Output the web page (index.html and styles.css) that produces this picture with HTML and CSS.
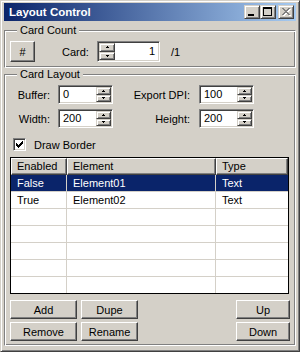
FILE: index.html
```html
<!DOCTYPE html>
<html>
<head>
<meta charset="utf-8">
<title>Layout Control</title>
<link rel="stylesheet" href="styles.css">
</head>
<body>
<div class="window">
  <div class="titlebar">
    <span class="title">Layout Control</span>
    <div class="caption-btns">
      <span class="cbtn"><svg width="14" height="12"><rect x="3" y="8" width="6" height="2"/></svg></span>
      <span class="cbtn"><svg width="14" height="12"><rect x="2" y="1" width="9" height="2"/><rect x="2" y="1" width="1" height="9"/><rect x="10" y="1" width="1" height="9"/><rect x="2" y="9" width="9" height="1"/></svg></span>
      <span class="cbtn cbtn-close"><svg width="14" height="12">
        <g fill="#fff" transform="translate(4 3)"><rect x="0" y="0" width="2" height="1"/><rect x="6" y="0" width="2" height="1"/><rect x="1" y="1" width="2" height="1"/><rect x="5" y="1" width="2" height="1"/><rect x="2" y="2" width="4" height="1"/><rect x="3" y="3" width="2" height="1"/><rect x="2" y="4" width="4" height="1"/><rect x="1" y="5" width="2" height="1"/><rect x="5" y="5" width="2" height="1"/><rect x="0" y="6" width="2" height="1"/><rect x="6" y="6" width="2" height="1"/></g>
        <g fill="#808080" transform="translate(3 2)"><rect x="0" y="0" width="2" height="1"/><rect x="6" y="0" width="2" height="1"/><rect x="1" y="1" width="2" height="1"/><rect x="5" y="1" width="2" height="1"/><rect x="2" y="2" width="4" height="1"/><rect x="3" y="3" width="2" height="1"/><rect x="2" y="4" width="4" height="1"/><rect x="1" y="5" width="2" height="1"/><rect x="5" y="5" width="2" height="1"/><rect x="0" y="6" width="2" height="1"/><rect x="6" y="6" width="2" height="1"/></g>
      </svg></span>
    </div>
  </div>

  <div class="client">
    <div class="group group-count">
      <span class="legend">Card Count</span>
      <div class="count-row">
        <span class="btn btn-hash">#</span>
        <span class="lbl-card">Card:</span>
        <div class="field field-card">
          <div class="spin">
            <span class="spin-btn spin-up"><svg width="3" height="2"><rect x="1" y="0" width="1" height="1"/><rect x="0" y="1" width="3" height="1"/></svg></span>
            <span class="spin-btn spin-down"><svg width="3" height="2"><rect x="0" y="0" width="3" height="1"/><rect x="1" y="1" width="1" height="1"/></svg></span>
          </div>
          <span class="val val-right">1</span>
        </div>
        <span class="of">/1</span>
      </div>
    </div>

    <div class="group group-layout">
      <span class="legend">Card Layout</span>
      <div class="params">
        <span class="plabel">Buffer:</span>
        <div class="field field-num">
          <span class="val">0</span>
          <div class="spin">
            <span class="spin-btn spin-up"><svg width="3" height="2"><rect x="1" y="0" width="1" height="1"/><rect x="0" y="1" width="3" height="1"/></svg></span>
            <span class="spin-btn spin-down"><svg width="3" height="2"><rect x="0" y="0" width="3" height="1"/><rect x="1" y="1" width="1" height="1"/></svg></span>
          </div>
        </div>
        <span class="plabel plabel-2">Export DPI:</span>
        <div class="field field-num">
          <span class="val">100</span>
          <div class="spin">
            <span class="spin-btn spin-up"><svg width="3" height="2"><rect x="1" y="0" width="1" height="1"/><rect x="0" y="1" width="3" height="1"/></svg></span>
            <span class="spin-btn spin-down"><svg width="3" height="2"><rect x="0" y="0" width="3" height="1"/><rect x="1" y="1" width="1" height="1"/></svg></span>
          </div>
        </div>
        <span class="plabel">Width:</span>
        <div class="field field-num">
          <span class="val">200</span>
          <div class="spin">
            <span class="spin-btn spin-up"><svg width="3" height="2"><rect x="1" y="0" width="1" height="1"/><rect x="0" y="1" width="3" height="1"/></svg></span>
            <span class="spin-btn spin-down"><svg width="3" height="2"><rect x="0" y="0" width="3" height="1"/><rect x="1" y="1" width="1" height="1"/></svg></span>
          </div>
        </div>
        <span class="plabel plabel-2">Height:</span>
        <div class="field field-num">
          <span class="val">200</span>
          <div class="spin">
            <span class="spin-btn spin-up"><svg width="3" height="2"><rect x="1" y="0" width="1" height="1"/><rect x="0" y="1" width="3" height="1"/></svg></span>
            <span class="spin-btn spin-down"><svg width="3" height="2"><rect x="0" y="0" width="3" height="1"/><rect x="1" y="1" width="1" height="1"/></svg></span>
          </div>
        </div>
      </div>

      <div class="check-row">
        <span class="checkbox"><svg width="9" height="9"><rect x="1" y="3" width="1" height="3"/><rect x="2" y="4" width="1" height="3"/><rect x="3" y="5" width="1" height="3"/><rect x="4" y="4" width="1" height="3"/><rect x="5" y="3" width="1" height="3"/><rect x="6" y="2" width="1" height="3"/><rect x="7" y="1" width="1" height="3"/></svg></span>
        <span class="check-label">Draw Border</span>
      </div>

      <div class="list">
        <div class="grid">
          <div class="hd">Enabled</div><div class="hd">Element</div><div class="hd">Type</div>
          <div class="c sel">False</div><div class="c sel">Element01</div><div class="c sel">Text</div>
          <div class="c">True</div><div class="c">Element02</div><div class="c">Text</div>
          <div class="c"></div><div class="c"></div><div class="c"></div>
          <div class="c"></div><div class="c"></div><div class="c"></div>
          <div class="c"></div><div class="c"></div><div class="c"></div>
          <div class="c"></div><div class="c"></div><div class="c"></div>
          <div class="c"></div><div class="c"></div><div class="c"></div>
        </div>
      </div>

      <div class="actions">
        <div class="actions-left">
          <span class="btn">Add</span>
          <span class="btn">Dupe</span>
          <span class="btn">Remove</span>
          <span class="btn">Rename</span>
        </div>
        <div class="actions-right">
          <span class="btn">Up</span>
          <span class="btn">Down</span>
        </div>
      </div>
    </div>
  </div>
</div>
</body>
</html>
```
FILE: styles.css
```css
* { box-sizing: border-box; }
html, body { margin: 0; padding: 0; }
body {
  width: 300px;
  height: 352px;
  background: #d4d0c8;
  font-family: "Liberation Sans", Arial, sans-serif;
  font-size: 11px;
  color: #000;
  overflow: hidden;
}
svg { display: block; }

.window {
  width: 300px;
  height: 352px;
  border: 1px solid;
  border-color: #d4d0c8 #404040 #404040 #d4d0c8;
  box-shadow: inset 1px 1px #fff, inset -1px -1px #808080;
  padding: 2px 3px 3px 3px;
  background: #d4d0c8;
  display: flex;
  flex-direction: column;
}

.titlebar {
  height: 18px;
  flex: none;
  display: flex;
  align-items: flex-start;
  background: linear-gradient(to right, #0a246a, #a6caf0);
}
.title {
  color: #fff;
  font-weight: bold;
  font-size: 11.5px;
  line-height: 18px;
  padding-left: 5px;
  flex: 1;
}
.caption-btns {
  display: flex;
  margin-top: 2px;
  margin-right: 2px;
}
.cbtn {
  width: 16px;
  height: 14px;
  border: 1px solid;
  border-color: #d4d0c8 #404040 #404040 #d4d0c8;
  box-shadow: inset 1px 1px #fff, inset -1px -1px #808080;
  background: #d4d0c8;
  fill: #000;
}
.cbtn-close { margin-left: 2px; }

.client {
  flex: 1;
  display: flex;
  flex-direction: column;
}

.group {
  border: 1px solid;
  border-color: #808080 #fff #fff #808080;
  box-shadow: inset 1px 1px #fff, inset -1px -1px #808080;
  display: flex;
  flex-direction: column;
  align-items: flex-start;
}
.legend {
  margin: -7px 0 0 7px;
  padding: 0 3px;
  height: 13px;
  line-height: 13px;
  background: #d4d0c8;
}

.group-count {
  margin-top: 9px;
  height: 38px;
  padding-left: 5px;
}
.count-row {
  margin-top: 4px;
  height: 21px;
  display: flex;
  align-items: center;
}
.btn {
  display: flex;
  align-items: center;
  justify-content: center;
  border: 1px solid;
  border-color: #fff #404040 #404040 #fff;
  box-shadow: inset -1px -1px #808080;
  background: #d4d0c8;
  height: 19px;
}
.btn-hash {
  width: 25px;
  height: 21px;
}
.lbl-card {
  margin-left: 27px;
  width: 35px;
}
.of { margin-left: 11px; }

.field {
  display: flex;
  border: 1px solid;
  border-color: #808080 #fff #fff #808080;
  box-shadow: inset 1px 1px #404040, inset -1px -1px #d4d0c8;
  padding: 1px;
  background: #fff;
}
.field-card {
  width: 63px;
  height: 21px;
}
.field-num {
  width: 55px;
  height: 19px;
}
.val {
  flex: 1;
  padding-left: 3px;
  line-height: 15px;
}
.field-card .val { line-height: 17px; }
.val-right {
  text-align: right;
  padding-left: 0;
  padding-right: 3px;
}
.spin {
  width: 15px;
  display: flex;
  flex-direction: column;
}
.field-card .spin { width: 16px; }
.spin-btn {
  flex: 1;
  display: flex;
  align-items: center;
  justify-content: center;
  border: 1px solid;
  border-color: #d4d0c8 #404040 #404040 #d4d0c8;
  box-shadow: inset 1px 1px #fff, inset -1px -1px #808080;
  background: #d4d0c8;
  fill: #000;
}

.group-layout {
  margin-top: 6px;
  height: 272px;
  padding: 0 5px;
}
.params {
  margin-top: 4px;
  display: grid;
  grid-template-columns: 48px 55px 86px 55px;
  grid-auto-rows: 19px;
  row-gap: 5px;
  align-items: center;
}
.plabel {
  text-align: right;
  padding-right: 8px;
}
.plabel-2 { padding-right: 9px; }

.check-row {
  margin-top: 10px;
  height: 13px;
  display: flex;
  align-items: center;
}
.checkbox {
  margin-left: 3px;
  width: 13px;
  height: 13px;
  border: 1px solid;
  border-color: #808080 #fff #fff #808080;
  box-shadow: inset 1px 1px #404040, inset -1px -1px #d4d0c8;
  padding: 1px;
  background: #fff;
  fill: #000;
}
.check-label { margin-left: 8px; }

.list {
  margin-top: 6px;
  width: 279px;
  height: 137px;
  border: 1px solid #000;
  background: #fff;
  overflow: hidden;
  flex: none;
}
.grid {
  display: grid;
  grid-template-columns: 56px 149px 1fr;
  grid-auto-rows: 17px;
}
.hd {
  border: 1px solid;
  border-color: #fff #404040 #404040 #fff;
  box-shadow: inset -1px -1px #808080;
  background: #d4d0c8;
  padding-left: 5px;
  line-height: 14px;
}
.c {
  border-right: 1px solid #d4d0c8;
  border-bottom: 1px solid #d4d0c8;
  padding-left: 6px;
  line-height: 16px;
}
.c:nth-child(3n) { border-right: none; }
.c.sel {
  background: #0a246a;
  color: #fff;
}

.actions {
  margin-top: 6px;
  align-self: stretch;
  display: flex;
  justify-content: space-between;
}
.actions-left {
  display: grid;
  grid-template-columns: 67px 57px;
  grid-auto-rows: 19px;
  column-gap: 4px;
  row-gap: 3px;
}
.actions-right {
  display: grid;
  grid-template-columns: 54px;
  grid-auto-rows: 19px;
  row-gap: 3px;
}
```
